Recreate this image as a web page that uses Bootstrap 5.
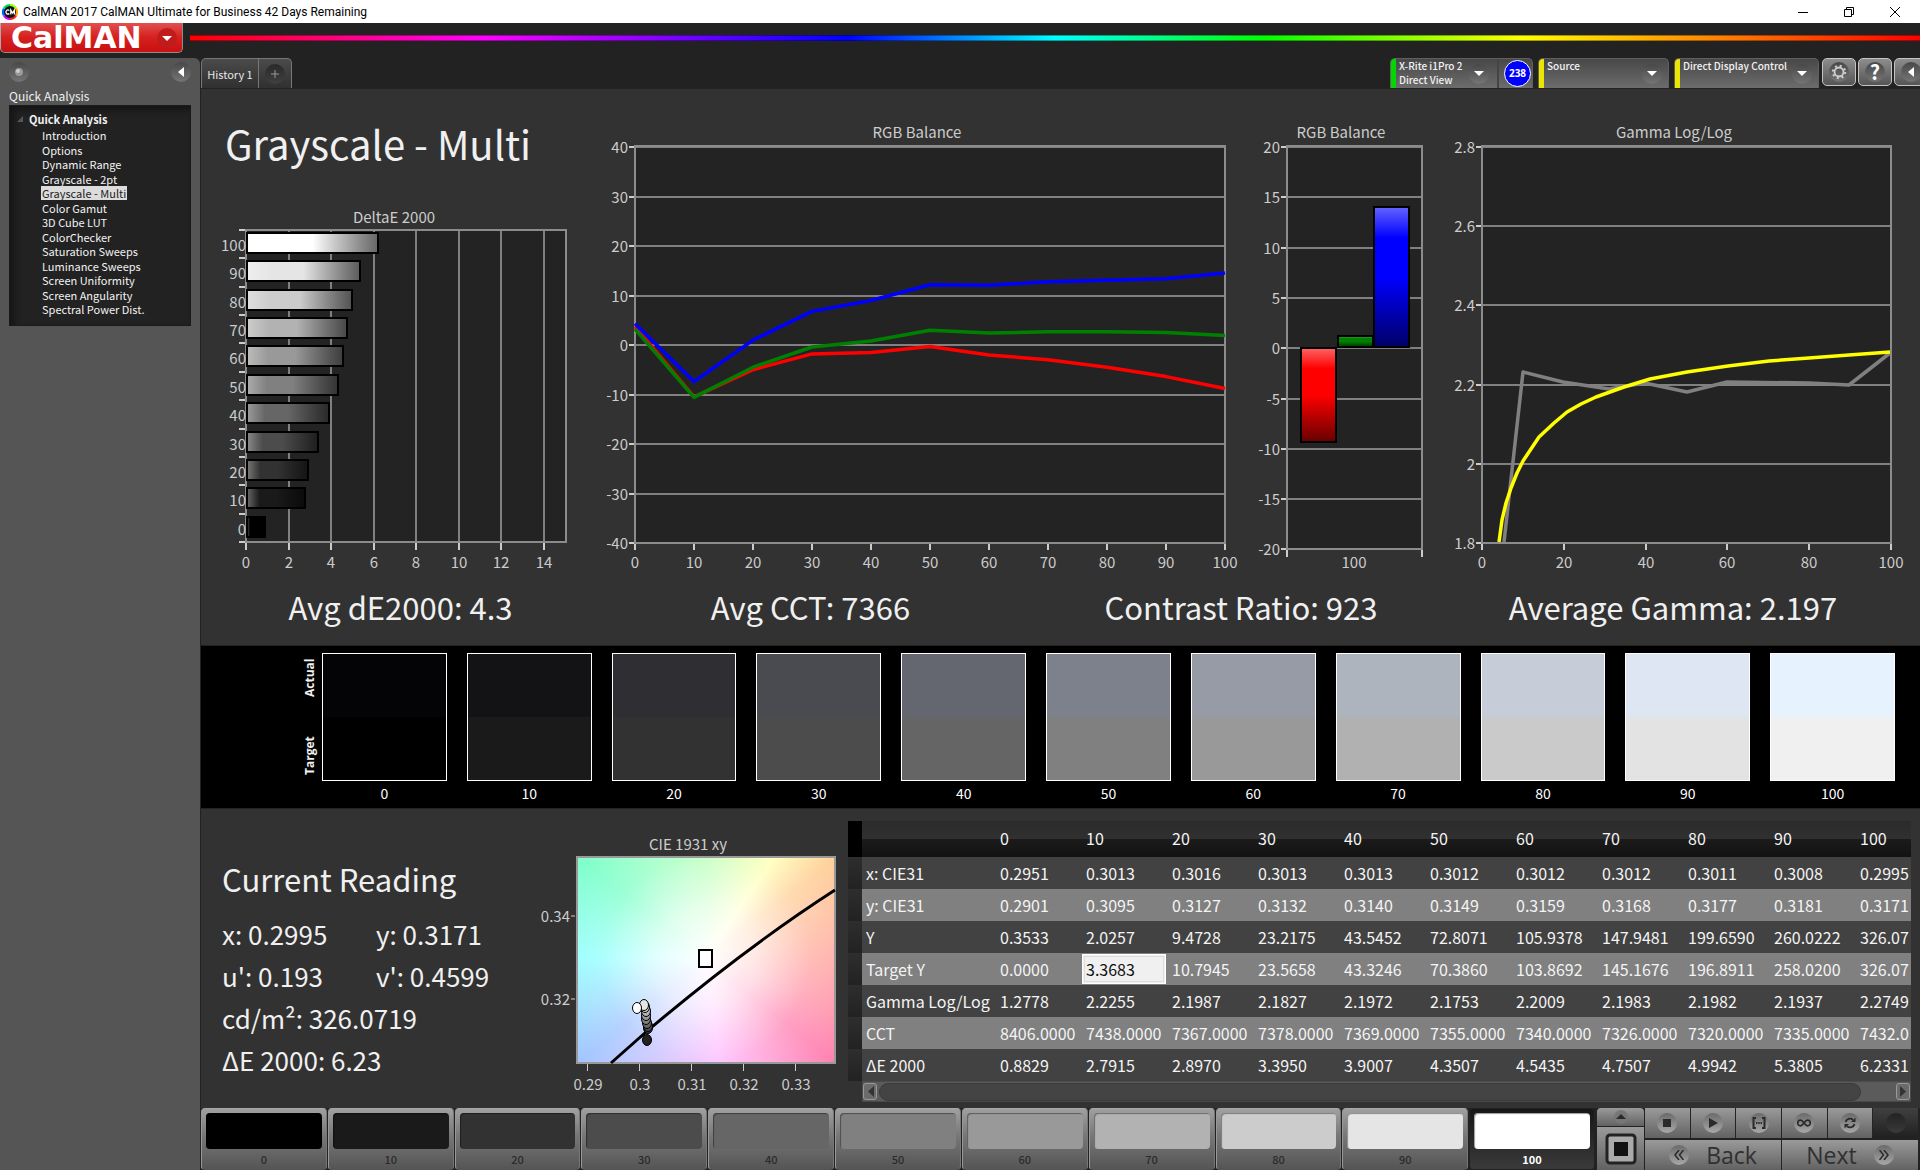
<!DOCTYPE html>
<html lang="en">
<head>
<meta charset="utf-8">
<meta name="viewport" content="width=device-width, initial-scale=1">
<title>CalMAN 2017</title>
<link rel="stylesheet" href="https://cdn.jsdelivr.net/npm/bootstrap@5.3.0/dist/css/bootstrap.min.css">
<style>
  :root { --ui: "Noto Sans CJK SC", "Noto Sans", sans-serif; }
  body { font-family: var(--ui); background: #232323; color: #f0f0f0; font-size: 12px; line-height: 16px; overflow-x: hidden; }
  button { font-family: inherit; }
  .titlebar { height: 23px; background: #fff; color: #000; padding: 0 2px; }
  .titlebar .app-name { margin-left: 5px; font: 12px/22px Roboto, sans-serif; }
  .titlebar .win { border: 0; background: none; padding: 0; width: 46px; height: 20px; line-height: 0; }
  .topband { height: 35px; background: #222; }
  .logo-btn { width: 183px; height: 30px; background: linear-gradient(#e25050, #d61f1f 50%, #c81010); border: 1px solid #8d8d8d; border-top: 0; border-left-color: #aaa; border-radius: 0 0 5px 5px; color: #fff; font: 700 30px/28px "DejaVu Sans", sans-serif; padding: 0 4px 0 10px; }
  .rainbow { height: 6px; margin: 12px 0 0 7px; background: linear-gradient(90deg, #f00, #f0f 17%, #00f 38%, #0ff 50%, #0f0 62%, #ff0 77%, #f00 100%); border: solid rgba(0,0,0,.35); border-width: 1px 0; }
  .side { width: 200px; background: #555; border-radius: 0 6px 0 0; }
  .side-tools { height: 28px; padding: 4px 9px 0; }
  .side h2 { font-size: 12px; line-height: 19px; margin: 0 9px; font-weight: 400; }
  .round { width: 20px; height: 20px; border-radius: 50%; border: 0; padding: 0; line-height: 0; flex: none; display: inline-flex; align-items: center; justify-content: center; background: linear-gradient(#484848, #757575); }
  .tree { background: #222; border: 1px solid #1a1a1a; box-shadow: inset 4px 4px 6px #151515; height: 221px; margin: 0 9px; padding: 4px 0 0 7px; }
  .tree ul { padding-left: 24px; }
  .tree a { color: #f2f2f2; text-decoration: none; font-size: 11px; padding: 0 1px; display: inline-block; height: 14px; line-height: 14px; }
  .tree li { height: 15px; line-height: 14px; }
  .tree li:nth-child(even) { height: 14px; }
  .tree .root { font-size: 11px; font-weight: 700; height: 18px; line-height: 18px; gap: 4px; }
  .tree a.active { background: #dcdcdc; color: #222; }
  .strip { height: 30px; background: #222; padding-left: 1px; }
  .tab-main, .tab-add { height: 30px; border: 1px solid #777; border-bottom: 0; background: linear-gradient(#4b4b4b, #303030); color: #e8e8e8; font-size: 11px; padding: 0; }
  .tab-main { width: 58px; border-radius: 5px 0 0 0; }
  .tab-add { width: 33px; border-left: 0; border-radius: 0 5px 0 0; }
  .tab-add .round { background: linear-gradient(#292929, #404040); }
  .devices { gap: 5px; }
  .dev { height: 30px; border: 1px solid #606060; border-bottom: 0; border-radius: 5px 5px 0 0; background: linear-gradient(#484848, #6c6c6c); color: #f2f2f2; font-size: 10px; font-weight: 500; line-height: 14px; text-align: left; padding: 0 6px 0 0; gap: 3px; overflow: hidden; }
  .dev .led { width: 5px; align-self: stretch; flex: none; }
  .dev-meter { width: 143px; padding-right: 1px; }
  .dev-source { width: 131px; }
  .dev-display { width: 145px; }
  .dev .round { margin-top: 5px; }
  .meter { border-left: 2px solid #444; margin-left: 5px; padding: 0 0 0 5px; height: 30px; }
  .count { width: 27px; height: 27px; border-radius: 50%; background: #00f; border: 1px solid #fff; font: 700 10px/25px "Open Sans", sans-serif; text-align: center; color: #fff; margin-top: 1px; }
  .tools { gap: 2px; margin-right: -8px; margin-left: -2px; }
  .tool { width: 34px; height: 28px; border: 1px solid #c4c4c4; border-radius: 5px; background: linear-gradient(#8d8d8d, #555); padding: 0; line-height: 0; }
  .work { background: #323232; border-top: 1px solid #222; border-left: 1px solid #222; }
  .work svg { display: block; width: 100%; height: auto; }
  .work svg text { font-family: var(--ui); font-size: 15px; fill: #ccc; }
  h1 { font-size: 40px; line-height: 60px; margin: 0; padding: 24px 0 0 24px; height: 111px; }
  h1, .stat, .reading { font-weight: 400; color: #f0f0f0; white-space: nowrap; }
  .stats { height: 65px; padding: 5px 35px 0 0; }
  .stat { font-size: 31px; line-height: 44px; text-align: center; }
  .band { background: #000; height: 164px; border-top: 1px solid #222; border-bottom: 1px solid #222; padding: 7px 25px 0 99px; }
  .vert { writing-mode: vertical-rl; transform: rotate(180deg); font: 700 12px/20px "Open Sans", sans-serif; height: 128px; width: 22px; padding: 6px 0; }
  .swatches { gap: 20px; }
  .swatch { flex: 1 1 0; min-width: 0; }
  .swatch .half { height: 64px; border: 1px solid #fff; }
  .swatch .actual { border-bottom: 0; }
  .swatch .target { border-top: 0; }
  .swatch p { margin: 2px 0 0; text-align: center; font-size: 14px; line-height: 20px; color: #fff; }
  .reading { flex: 0 0 330px; padding: 45px 0 0 21px; font-size: 26px; line-height: 42px; }
  .reading h2 { font-size: 31px; line-height: 50px; margin: 0 0 9px; font-weight: 400; }
  .reading .first { width: 154px; }
  .cie { flex: 0 0 317px; padding-top: 1px; }
  .readings { flex: 1 1 0; min-width: 0; padding: 12px 9px 0 0; overflow: hidden; }
  .clip { overflow: hidden; }
  .grid-table { table-layout: fixed; width: 1094px; border-collapse: collapse; color: #f4f4f4; font-size: 16px; line-height: 22px; }
  .grid-table th, .grid-table td { font-weight: 400; padding: 0 0 0 4px; height: 32px; white-space: nowrap; background: #424242; }
  .grid-table thead th { height: 36px; padding-bottom: 2px; }
  .grid-table thead tr { background: linear-gradient(#2b2b2b, #303030 50%, #1b1b1b 51%, #121212); }
  .grid-table thead th { background: none; }
  .grid-table thead .gutter { background: #000; }
  .grid-table tbody tr:nth-child(even) > * { background: #808080; }
  .grid-table tbody tr > .gutter, .grid-table tbody tr:nth-child(even) > .gutter { background: linear-gradient(#2e2e2e, #222); }
  .grid-table input { display: block; width: 84px; height: 30px; margin: -1px 0 0 -4px; padding: 0 0 0 3px; border: 1px solid #fff; outline: 1px solid #ddd; outline-offset: -3px; background: #f0f0f0; color: #111; font: inherit; }
  .scroller { height: 21px; margin-left: 14px; background: #5b5b5b; border: 1px solid #4a4a4a; gap: 2px; }
  .scroller .thumb { background: #444; border-radius: 9px; height: 18px; border: 1px solid #3a3a3a; margin-right: 33px; }
  .arrow { width: 14px; height: 17px; border: 1px solid #999; border-radius: 3px; background: #6b6b6b; padding: 0; line-height: 0; display: flex; align-items: center; justify-content: center; }
  .work .arrow svg { width: 7px; height: 11px; }
  .foot { height: 62px; background: #222; gap: 1px; padding-left: 1px; }
  .patches { gap: 1px; min-width: 0; }
  .patch { flex: 1 1 0; min-width: 0; border: 1px solid; border-color: #a8a8a8 #777 #555 #999; border-radius: 4px; background: linear-gradient(#a0a0a0, #777 45%, #555); padding: 4px 4px 0; color: #2b2b2b; font-size: 11px; line-height: 20px; font-weight: 500; }
  .patch .chip { display: block; height: 36px; border-radius: 4px; box-shadow: inset 1px 1px 1px rgba(0,0,0,.4); }
  .patch.on { background: linear-gradient(#161616, #3a3a3a); border-color: #222; color: #fff; font-weight: 700; }
  .ctl { border: 0; background: linear-gradient(#9a9a9a, #626262); padding: 0; line-height: 0; color: #303030; }
  .ctl .round { background: linear-gradient(#6a6a6a, #a8a8a8); }
  .lifter { width: 48px; gap: 1px; padding-left: 1px; }
  .lifter .up { height: 18px; border-radius: 4px 4px 0 0; }
  .transport { width: 275px; gap: 2px; padding-right: 2px; }
  .transport .cell { flex: 1 1 0; height: 30px; }
  .transport .idle { background: linear-gradient(#404040, #202020); }
  .transport .idle .round { background: linear-gradient(#222, #3a3a3a); }
  .transport .wide { flex: 1 1 0; height: 30px; font: 500 23px/28px "Open Sans", sans-serif; gap: 17px; }
</style>
</head>
<body class="d-flex flex-column min-vh-100">

<header>
  <div class="titlebar d-flex align-items-center">
    <svg width="16" height="16" viewBox="0 0 16 16">
      <path d="M8 0a8 8 0 0 1 7 4L8 8z" fill="#9f0"/><path d="M15 4a8 8 0 0 1 0 8L8 8z" fill="#fa0"/><path d="M15 12a8 8 0 0 1-7 4V8z" fill="#f22"/><path d="M8 16a8 8 0 0 1-7-4l7-4z" fill="#c0f"/><path d="M1 12a8 8 0 0 1 0-8l7 4z" fill="#06f"/><path d="M1 4a8 8 0 0 1 7-4v8z" fill="#0d6"/>
      <circle cx="8" cy="8" r="6" fill="#111"/><path d="M7.300 6.600a2 2 0 1 0 0 2.900M8.800 10.500V6l1.800 3 1.800-3v4.500" fill="none" stroke="#fff" stroke-width="1.300"/>
    </svg>
    <span class="app-name flex-grow-1">CalMAN 2017 CalMAN Ultimate for Business 42 Days Remaining</span>
    <button class="win" aria-label="Minimize"><svg width="12" height="12"><path d="M1 6.500h10" stroke="#000"/></svg></button>
    <button class="win" aria-label="Restore"><svg width="12" height="12" fill="none" stroke="#000"><path d="M1.500 3.500h7v7h-7zM3.500 3.500v-2h7v7h-2"/></svg></button>
    <button class="win" aria-label="Close"><svg width="12" height="12"><path d="M1 1l10 10M11 1L1 11" stroke="#000"/></svg></button>
  </div>
  <div class="topband d-flex align-items-start">
    <button class="logo-btn d-flex align-items-center justify-content-between flex-shrink-0"><span>CalMAN</span>
      <svg width="22" height="22"><circle cx="11" cy="11" r="10" fill="#c01c1c"/><path d="M6 9h10l-5 5z" fill="#fff"/></svg></button>
    <div class="rainbow flex-grow-1"></div>
  </div>
</header>

<div class="d-flex flex-grow-1">
  <aside class="side flex-shrink-0">
    <div class="side-tools d-flex justify-content-between">
      <button class="round" aria-label="Pin"><svg width="10" height="10"><circle cx="5" cy="5" r="4" fill="#999"/><circle cx="4" cy="4" r="2" fill="#ccc"/></svg></button>
      <button class="round" aria-label="Collapse"><svg width="10" height="12"><path d="M8 1v10L2 6z" fill="#fff"/></svg></button>
    </div>
    <h2>Quick Analysis</h2>
    <nav class="tree" aria-label="Workflow">
      <div class="root d-flex align-items-center"><svg width="8" height="8"><path d="M6 1v6H0z" fill="#555"/></svg>Quick Analysis</div>
      <ul class="list-unstyled mb-0">
        <li><a href="#">Introduction</a></li>
        <li><a href="#">Options</a></li>
        <li><a href="#">Dynamic Range</a></li>
        <li><a href="#">Grayscale - 2pt</a></li>
        <li><a href="#" class="active" aria-current="page">Grayscale - Multi</a></li>
        <li><a href="#">Color Gamut</a></li>
        <li><a href="#">3D Cube LUT</a></li>
        <li><a href="#">ColorChecker</a></li>
        <li><a href="#">Saturation Sweeps</a></li>
        <li><a href="#">Luminance Sweeps</a></li>
        <li><a href="#">Screen Uniformity</a></li>
        <li><a href="#">Screen Angularity</a></li>
        <li><a href="#">Spectral Power Dist.</a></li>
      </ul>
    </nav>
  </aside>

  <div class="flex-grow-1 d-flex flex-column overflow-hidden">
    <div class="strip d-flex">
      <button class="tab-main">History 1</button>
      <button class="tab-add" aria-label="Add tab"><span class="round"><svg width="8" height="8"><path d="M4 0v8M0 4h8" stroke="#999"/></svg></span></button>
      <div class="devices ms-auto d-flex">
        <button class="dev dev-meter d-flex"><span class="led" style="background:#00d800"></span><span class="flex-grow-1 text-nowrap">X-Rite i1Pro 2<br>Direct View</span><span class="round"><svg width="10" height="6"><path d="M0 0h10L5 5z" fill="#fff"/></svg></span><span class="meter"><span class="count d-block">238</span></span></button>
        <button class="dev dev-source d-flex"><span class="led" style="background:#eae600"></span><span class="flex-grow-1">Source</span><span class="round"><svg width="10" height="6"><path d="M0 0h10L5 5z" fill="#fff"/></svg></span></button>
        <button class="dev dev-display d-flex"><span class="led" style="background:#eae600"></span><span class="flex-grow-1 text-nowrap">Direct Display Control</span><span class="round"><svg width="10" height="6"><path d="M0 0h10L5 5z" fill="#fff"/></svg></span></button>
        <div class="tools d-flex">
          <button class="tool" aria-label="Settings"><span class="round"><svg width="16" height="16" viewBox="0 0 16 16"><circle cx="8" cy="8" r="4.500" fill="none" stroke="#d0d0d0" stroke-width="1.800"/><circle cx="8" cy="8" r="6.200" fill="none" stroke="#d0d0d0" stroke-width="2" stroke-dasharray="2 2.870"/></svg></span></button>
          <button class="tool" aria-label="Help"><span class="round fw-bold fs-5 lh-1 text-white">?</span></button>
          <button class="tool" aria-label="Collapse panel"><span class="round"><svg width="10" height="12"><path d="M8 1v10L2 6z" fill="#fff"/></svg></span></button>
        </div>
      </div>
    </div>

    <main class="work flex-grow-1 d-flex flex-column">
      <div class="d-flex">
        <section style="flex:389 1 0">
          <h1>Grayscale - Multi</h1>
          <svg id="deltaE" viewBox="202 200 389 380" role="img" aria-label="DeltaE 2000"></svg>
        </section>
        <section style="flex:650 1 0"><svg id="rgbLines" viewBox="590 89 650 491" role="img" aria-label="RGB Balance by level"></svg></section>
        <section style="flex:200 1 0"><svg id="rgbBars" viewBox="1240 89 200 491" role="img" aria-label="RGB Balance"></svg></section>
        <section style="flex:480 1 0"><svg id="gamma" viewBox="1440 89 480 491" role="img" aria-label="Gamma Log/Log"></svg></section>
      </div>

      <div class="stats d-flex">
        <div class="stat" style="flex:399 1 0">Avg dE2000: 4.3</div>
        <div class="stat" style="flex:421 1 0">Avg CCT: 7366</div>
        <div class="stat" style="flex:440 1 0">Contrast Ratio: 923</div>
        <div class="stat" style="flex:424 1 0">Average Gamma: 2.197</div>
      </div>

      <section class="band d-flex" aria-label="Swatches">
        <div class="vert d-flex justify-content-between"><span>Target</span><span>Actual</span></div>
        <div class="swatches d-flex flex-grow-1" id="swatches"></div>
      </section>

      <div class="d-flex flex-grow-1">
        <section class="reading">
          <h2>Current Reading</h2>
          <div class="d-flex"><div class="first">x: 0.2995</div><div>y: 0.3171</div></div>
          <div class="d-flex"><div class="first">u': 0.193</div><div>v': 0.4599</div></div>
          <div>cd/m²: 326.0719</div>
          <div>ΔE 2000: 6.23</div>
        </section>
        <section class="cie">
          <svg id="cie" viewBox="531 810 317 290" role="img" aria-label="CIE 1931 xy">
            <text x="688" y="850" text-anchor="middle">CIE 1931 xy</text>
            <foreignObject x="576" y="857" width="260" height="207"><div style="width:260px;height:207px;background:radial-gradient(circle at 50% 49%, #fff 0, rgba(255,255,255,.72) 30%, rgba(255,255,255,.25) 62%, rgba(255,255,255,0) 100%), conic-gradient(from 0deg at 50% 49%, #b4ffb4, #ffffb4 34deg, #ffd098 52deg, #ffa8a0 90deg, #ff80b0 129deg, #ffb4ff 172deg, #a0c4ff 231deg, #90ffff 270deg, #7affc8 308deg, #b4ffb4 360deg)"></div></foreignObject>
            <rect x="577" y="857" width="258" height="206" fill="none" stroke="#999" stroke-width="2"/>
            <path d="M611 1063L646 1032Q745 948 835 890" fill="none" stroke="#000" stroke-width="3"/>
            <rect x="699" y="950" width="13" height="17" fill="none" stroke="#000" stroke-width="2"/>
            <g id="dots" stroke="#000"></g>
            <path d="M571 916h4M571 999h4M587.500 1064v7M639.500 1064v7M691.500 1064v7M743.500 1064v7M795.500 1064v7" stroke="#ccc"/>
            <g text-anchor="end"><text x="570" y="922">0.34</text><text x="570" y="1005">0.32</text></g>
            <g text-anchor="middle"><text x="588" y="1090">0.29</text><text x="640" y="1090">0.3</text><text x="692" y="1090">0.31</text><text x="744" y="1090">0.32</text><text x="796" y="1090">0.33</text></g>
          </svg>
        </section>
        <section class="readings">
          <div class="clip">
            <table class="grid-table" id="grid">
              <colgroup id="cols"></colgroup>
              <thead></thead>
              <tbody></tbody>
            </table>
          </div>
          <div class="scroller d-flex align-items-center">
            <button class="arrow" aria-label="Scroll left"><svg viewBox="0 0 7 11"><path d="M7 0v11L1 5.500z" fill="#333"/></svg></button>
            <div class="thumb flex-grow-1"></div>
            <button class="arrow" aria-label="Scroll right"><svg viewBox="0 0 7 11"><path d="M0 0v11l6-5.500z" fill="#333"/></svg></button>
          </div>
        </section>
      </div>
    </main>

    <footer class="foot d-flex">
      <div class="patches d-flex flex-grow-1" id="patches"></div>
      <div class="lifter d-flex flex-column">
        <button class="ctl up" aria-label="Expand"><svg width="16" height="16"><circle cx="8" cy="8" r="7" fill="#777"/><path d="M3 10h10L8 5z" fill="#2a2a2a"/></svg></button>
        <button class="ctl flex-grow-1" aria-label="Pattern window"><svg width="34" height="34"><rect x="3" y="3" width="28" height="28" rx="3" fill="#aaa" stroke="#222" stroke-width="3"/><rect x="10" y="10" width="14" height="14" fill="#111"/></svg></button>
      </div>
      <div class="transport d-flex flex-column">
        <div class="d-flex gap-0">
          <button class="ctl cell border-end border-dark" aria-label="Stop"><span class="round"><svg width="8" height="8"><path d="M0 0h8v8H0z" fill="#2a2a2a"/></svg></span></button>
          <button class="ctl cell border-end border-dark" aria-label="Play"><span class="round"><svg width="10" height="10"><path d="M1 0l9 5-9 5z" fill="#2a2a2a"/></svg></span></button>
          <button class="ctl cell border-end border-dark" aria-label="Read series"><span class="round"><svg width="14" height="12" fill="none" stroke="#2a2a2a" stroke-width="2"><path d="M4 1H1.500v10H4M10 1h2.500v10H10"/><path d="M4 6h6" stroke-dasharray="1.400 .9"/></svg></span></button>
          <button class="ctl cell border-end border-dark" aria-label="Continuous"><span class="round"><svg width="14" height="8" fill="none" stroke="#2a2a2a" stroke-width="1.700"><path d="M7 4C5.500 2 4.500 1.200 3.500 1.200a2.800 2.800 0 0 0 0 5.600C4.500 6.800 5.500 6 7 4s2.500-2.800 3.500-2.800a2.800 2.800 0 0 1 0 5.600C9.500 6.800 8.500 6 7 4z"/></svg></span></button>
          <button class="ctl cell border-end border-dark" aria-label="Refresh"><span class="round"><svg width="12" height="12" viewBox="0 0 12 12"><path d="M1.500 5A4.500 4 0 0 1 9 2.800M10.500 7A4.500 4 0 0 1 3 9.200" fill="none" stroke="#2a2a2a" stroke-width="1.800"/><path d="M11.500.5v4.500H7zM.5 11.500V7H5z" fill="#2a2a2a"/></svg></span></button>
          <button class="ctl cell idle" aria-label="Status"><span class="round"></span></button>
        </div>
        <div class="d-flex gap-0">
          <button class="ctl wide border-end border-dark d-flex align-items-center justify-content-center"><span class="round"><svg width="10" height="10" fill="none" stroke="#2a2a2a" stroke-width="1.500"><path d="M5 0L1 5l4 5M9.500 0l-4 5 4 5"/></svg></span>Back</button>
          <button class="ctl wide d-flex align-items-center justify-content-center">Next<span class="round"><svg width="10" height="10" fill="none" stroke="#2a2a2a" stroke-width="1.500"><path d="M.5 0l4 5-4 5M5 0l4 5-4 5"/></svg></span></button>
        </div>
      </div>
    </footer>
  </div>
</div>

<script src="https://cdn.jsdelivr.net/npm/bootstrap@5.3.0/dist/js/bootstrap.bundle.min.js"></script>
<script>
const levels = [0, 10, 20, 30, 40, 50, 60, 70, 80, 90, 100];
const gray = ['#000', '#1a1a1a', '#323232', '#4c4c4c', '#666', '#808080', '#999', '#b2b2b2', '#ccc', '#e5e5e5', '#fff'];
const put = (id, html) => { document.getElementById(id).innerHTML = html; };
const line = (x1, y1, x2, y2, c = '#808080', w = 2) => `<path d="M${x1} ${y1}L${x2} ${y2}" stroke="${c}" stroke-width="${w}"/>`;
const label = (x, y, t, a = 'middle') => `<text x="${x}" y="${y}" text-anchor="${a}">${t}</text>`;
const poly = (pts, c, w = 3.5) => `<polyline points="${pts.join(' ')}" fill="none" stroke="${c}" stroke-width="${w}" stroke-linejoin="round"/>`;

/* Plot area with horizontal grid lines, tick marks and value labels. */
function frame(l, t, r, b, title, tx, ticks, y0, step) {
  let s = `<rect x="${l}" y="${t}" width="${r - l}" height="${b - t}" fill="#232323"/>`;
  ticks.forEach((v, i) => {
    const y = Math.round(y0 + i * step);
    s += line(l - 6, y, l, y, '#ccc', 2) + line(l, y, r, y) + label(l - 7, y + 6, v, 'end');
  });
  return s + `<rect x="${l}" y="${t}" width="${r - l}" height="${b - t}" fill="none" stroke="#8c8c8c" stroke-width="2"/>` + label(tx, 138, title);
}

/* DeltaE 2000 bars */
(() => {
  const dE = [0.8829, 2.7915, 2.8970, 3.3950, 3.9007, 4.3507, 4.5435, 4.7507, 4.9942, 5.3805, 6.2331];
  let s = '<defs>' + gray.map((g, i) => `<linearGradient id="g${i}"><stop stop-color="color-mix(in srgb, ${g}, white 35%)"/><stop offset=".22" stop-color="${g}"/><stop offset=".5" stop-color="${g}"/><stop offset="1" stop-color="color-mix(in srgb, ${g}, black 60%)"/></linearGradient>`).join('') + '</defs>';
  s += '<rect x="247" y="230" width="320" height="312" fill="#232323"/>';
  for (let v = 0; v < 16; v += 2) {
    const x = Math.round(247 + v * 21.25);
    s += line(x, 230, x, 542) + line(x, 543, x, 550, '#ccc') + label(x, 568, v);
  }
  s += '<rect x="247" y="230" width="320" height="312" fill="none" stroke="#8c8c8c" stroke-width="2"/>';
  for (let i = 0; i <= 11; i++) { const y = Math.round(230 + i * 28.36); s += line(240, y, 246, y, '#ccc'); }
  dE.forEach((v, i) => {
    const y = Math.round(232 + (10 - i) * 28.36);
    s += `<rect x="248" y="${y + 1}" width="${Math.round(v * 21.25) - 1}" height="20" fill="url(#g${i})" stroke="#000" stroke-width="2"/>` + label(247, y + 19, levels[i], 'end');
  });
  put('deltaE', s + label(395, 223, 'DeltaE 2000'));
})();

/* RGB balance across the gray levels */
(() => {
  const X = i => 635 + i * 59, Y = v => (345 - v * 4.94).toFixed(1);
  const series = {
    '#f00': [3.7, -10.5, -5, -1.8, -1.5, -0.3, -2, -3, -4.5, -6.4, -8.8],
    '#008000': [3.2, -10.6, -4.5, -0.4, 0.8, 3, 2.4, 2.7, 2.7, 2.5, 1.9],
    '#00f': [4.3, -7.4, 1, 6.8, 9, 12.2, 12.1, 12.8, 13.1, 13.4, 14.6]
  };
  let s = frame(635, 146, 1225, 543, 'RGB Balance', 917, [40, 30, 20, 10, 0, -10, -20, -30, -40], 147, 49.5);
  levels.forEach((v, i) => { s += line(X(i), 544, X(i), 550, '#ccc') + label(X(i), 568, v); });
  for (const c of ['#f00', '#00f', '#008000']) s += poly(series[c].map((v, i) => X(i) + ',' + Y(v)), c);
  put('rgbLines', s);
})();

/* RGB balance of the current reading */
(() => {
  const grad = (id, a, b, c) => `<linearGradient id="${id}" x2="0" y2="1"><stop stop-color="${a}"/><stop offset=".22" stop-color="${b}"/><stop offset=".5" stop-color="${b}"/><stop offset="1" stop-color="${c}"/></linearGradient>`;
  let s = '<defs>' + grad('br', '#ff6464', '#f00', '#600') + grad('bg', '#4caf4c', '#008000', '#030') + grad('bb', '#6464ff', '#00f', '#006') + '</defs>';
  s += frame(1287, 146, 1422, 549, 'RGB Balance', 1341, [20, 15, 10, 5, 0, -5, -10, -15, -20], 147, 50.3);
  s += line(1287, 550, 1287, 557, '#ccc') + line(1422, 550, 1422, 557, '#ccc') + label(1354, 568, 100);
  s += '<g stroke="#000" stroke-width="2"><rect x="1301" y="348" width="35" height="94" fill="url(#br)"/><rect x="1338" y="336" width="35" height="11" fill="url(#bg)"/><rect x="1374" y="207" width="35" height="140" fill="url(#bb)"/></g>';
  put('rgbBars', s);
})();

/* Gamma: measured points and target curve */
(() => {
  let s = frame(1482, 146, 1891, 543, 'Gamma Log/Log', 1674, ['2.8', '2.6', '2.4', '2.2', '2', '1.8'], 147, 79.2);
  [0, 20, 40, 60, 80, 100].forEach((v, i) => { const x = Math.round(1482 + i * 81.8); s += line(x, 544, x, 550, '#ccc') + label(x, 568, v); });
  s += poly(['1504,542', '1523,372', '1563,382', '1609,389', '1645,383', '1687,392', '1727,382', '1809,383', '1849,385', '1890,353'], '#808080');
  s += poly(['1499,542', '1502,520', '1506,503', '1511,488', '1517,473', '1523,461', '1531,449', '1539,437', '1554,423', '1567,412', '1581,404', '1596,397', '1624,387', '1650,379', '1687,372', '1728,366', '1769,361', '1809,358', '1849,355', '1890,352'], '#ff0');
  put('gamma', s);
})();

/* Chromaticity points, darkest first */
put('dots', [[647, 1040, '#222'], [648, 1028, '#333'], [648, 1026, '#4c4c4c'], [647, 1023, '#666'], [646, 1019, '#808080'], [646, 1015, '#999'], [646, 1011, '#b2b2b2'], [645, 1007, '#ccc'], [644, 1005, '#e5e5e5'], [637, 1008, '#fff']]
  .map(([x, y, c]) => `<ellipse cx="${x}" cy="${y}" rx="4.500" ry="5.500" fill="${c}"/>`).join(''));

/* Actual / target swatches */
const actual = ['#040406', '#131315', '#2f2e33', '#4a4b50', '#64676f', '#7d818b', '#969ba6', '#aeb4be', '#c6cdd8', '#dee6f3', '#e7f2ff'];
const target = ['#000', '#1a1a1a', '#323232', '#4c4c4c', '#656565', '#808080', '#999', '#b1b1b1', '#cacaca', '#e3e3e3', '#f0f0f0'];
put('swatches', levels.map((v, i) => `<div class="swatch"><div class="half actual" style="background:${actual[i]}"></div><div class="half target" style="background:${target[i]}"></div><p>${v}</p></div>`).join(''));

/* Pattern buttons */
put('patches', levels.map((v, i) => `<button class="patch${v === 100 ? ' on' : ''}"><span class="chip" style="background:${gray[i]}"></span>${v}</button>`).join(''));

/* Measurement table */
const rows = [
  ['x: CIE31', '0.2951 0.3013 0.3016 0.3013 0.3013 0.3012 0.3012 0.3012 0.3011 0.3008 0.2995'],
  ['y: CIE31', '0.2901 0.3095 0.3127 0.3132 0.3140 0.3149 0.3159 0.3168 0.3177 0.3181 0.3171'],
  ['Y', '0.3533 2.0257 9.4728 23.2175 43.5452 72.8071 105.9378 147.9481 199.6590 260.0222 326.07'],
  ['Target Y', '0.0000 3.3683 10.7945 23.5658 43.3246 70.3860 103.8692 145.1676 196.8911 258.0200 326.07'],
  ['Gamma Log/Log', '1.2778 2.2255 2.1987 2.1827 2.1972 2.1753 2.2009 2.1983 2.1982 2.1937 2.2749'],
  ['CCT', '8406.0000 7438.0000 7367.0000 7378.0000 7369.0000 7355.0000 7340.0000 7326.0000 7320.0000 7335.0000 7432.0'],
  ['ΔE 2000', '0.8829 2.7915 2.8970 3.3950 3.9007 4.3507 4.5435 4.7507 4.9942 5.3805 6.2331']
];
const grid = document.getElementById('grid');
put('cols', '<col style="width:14px"><col style="width:134px">' + levels.map(() => '<col style="width:86px">').join(''));
grid.tHead.innerHTML = '<tr><td class="gutter"></td><td style="background:none"></td>' + levels.map(v => `<th scope="col">${v}</th>`).join('') + '</tr>';
grid.tBodies[0].innerHTML = rows.map(([name, vals]) => `<tr><td class="gutter"></td><th scope="row">${name}</th>` + vals.split(' ').map((v, i) =>
  name === 'Target Y' && i === 1 ? `<td><input type="text" value="${v}" aria-label="Target Y at 10"></td>` : `<td>${v}</td>`).join('') + '</tr>').join('');
</script>
</body>
</html>
